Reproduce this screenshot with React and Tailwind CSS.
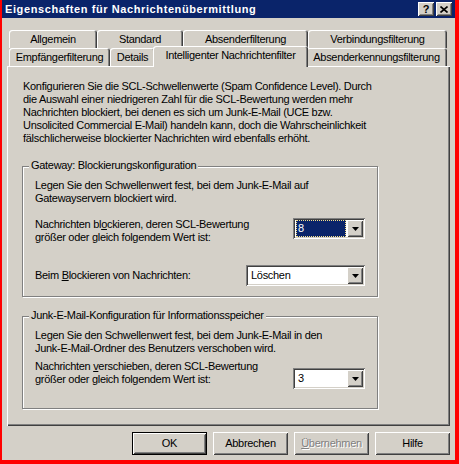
const RAISED =
  "shadow-[inset_1px_1px_0_#ffffff,inset_-1px_-1px_0_#404040,inset_2px_2px_0_#d4d0c8,inset_-2px_-2px_0_#808080]";
const SUNKEN =
  "shadow-[inset_1px_1px_0_#808080,inset_-1px_-1px_0_#ffffff,inset_2px_2px_0_#404040,inset_-2px_-2px_0_#d4d0c8]";
const TAB =
  "shadow-[inset_1px_1px_0_#ffffff,inset_-1px_0_0_#404040,inset_-2px_0_0_#808080] rounded-t-[3px] bg-[#d4d0c8]";

const ROW1 = [
  { label: "Allgemein", w: "w-[88px]" },
  { label: "Standard", w: "w-[86px]" },
  { label: "Absenderfilterung", w: "w-[125px]" },
  { label: "Verbindungsfilterung", w: "w-[139px]" },
];

function Arrow() {
  return (
    <svg width="7" height="4" viewBox="0 0 7 4">
      <path d="M0 0h7L3.5 4z" fill="#000" />
    </svg>
  );
}

function Combo({ value, focused, w }) {
  return (
    <div className={`${w} h-[21px] p-[2px] bg-white flex ${SUNKEN}`}>
      <div className="flex-1 flex items-center pl-[1px] pr-[1px]">
        {focused ? (
          <div className="w-full h-full bg-[#0a246a] text-white border border-dotted border-[#f5e08a] flex items-center pl-[1px] leading-none">
            {value}
          </div>
        ) : (
          <span className="pl-[2px] leading-none">{value}</span>
        )}
      </div>
      <div className={`w-[16px] h-full bg-[#d4d0c8] flex items-center justify-center ${RAISED}`}>
        <Arrow />
      </div>
    </div>
  );
}

function Button({ children, def, disabled }) {
  return (
    <div
      className={`w-[75px] h-[23px] flex items-center justify-center ${
        def ? "border border-black" : ""
      }`}
    >
      <div className={`w-full h-full flex items-center justify-center ${RAISED}`}>
        <span
          className={
            disabled ? "text-[#808080] [text-shadow:1px_1px_0_#ffffff]" : "text-black"
          }
        >
          {children}
        </span>
      </div>
    </div>
  );
}

function GroupBox({ title, h, children }) {
  return (
    <div
      className={`relative w-[356px] ${h} border border-[#808080] shadow-[inset_1px_1px_0_#ffffff,1px_1px_0_#ffffff]`}
    >
      <span className="absolute -top-[8px] left-[6px] px-[2px] bg-[#d4d0c8] leading-[13px] whitespace-nowrap">
        {title}
      </span>
      {children}
    </div>
  );
}

export default function App() {
  return (
    <div className="w-[459px] h-[464px] border-l-2 border-r-4 border-b-4 border-[#ff0000] bg-[#d4d0c8] flex flex-col font-['Liberation_Sans',Arial,sans-serif] text-[11px] leading-[13px] tracking-[-0.3px] text-black">
      {/* Title bar */}
      <div className="h-[18px] bg-[#0a246a] flex items-center justify-between pl-[3px] pr-[3px]">
        <span className="text-white font-bold text-[11px] whitespace-nowrap tracking-[0.6px]">
          Eigenschaften für Nachrichtenübermittlung
        </span>
        <div className="flex items-center gap-[2px]">
          <div className={`w-[16px] h-[14px] bg-[#d4d0c8] flex items-center justify-center ${RAISED}`}>
            <span className="font-bold text-[11px] leading-none">?</span>
          </div>
          <div className={`w-[16px] h-[14px] bg-[#d4d0c8] flex items-center justify-center ${RAISED}`}>
            <svg width="8" height="7" viewBox="0 0 8 7">
              <path d="M0.5 0.5L7.5 6.5M7.5 0.5L0.5 6.5" stroke="#000" strokeWidth="1.6" />
            </svg>
          </div>
        </div>
      </div>

      <div className="flex-1 flex flex-col px-[5px]">
        {/* Tabs */}
        <div className="mt-[12px] ml-[2px] flex">
          {ROW1.map((t) => (
            <div key={t.label} className={`${t.w} h-[18px] flex items-center justify-center pt-[1px] ${TAB}`}>
              {t.label}
            </div>
          ))}
        </div>
        <div className="ml-[2px] flex h-[18px] items-start">
          <div className={`w-[101px] h-[18px] flex items-center justify-center pt-[1px] ${TAB}`}>
            Empfängerfilterung
          </div>
          <div className={`w-[45px] h-[18px] flex items-center justify-center pt-[1px] ${TAB}`}>
            Details
          </div>
          <div className={`relative z-10 w-[155px] h-[21px] -mt-[2px] -mx-[2px] flex justify-center pt-[3px] ${TAB}`}>
            Intelligenter Nachrichtenfilter
          </div>
          <div className={`w-[141px] h-[18px] flex items-center justify-center pt-[1px] ${TAB}`}>
            Absenderkennungsfilterung
          </div>
        </div>

        {/* Panel */}
        <div className="h-[360px] w-[443px] shadow-[inset_1px_1px_0_#ffffff,inset_-1px_-1px_0_#404040,inset_-2px_-2px_0_#808080] flex flex-col">
          <p className="pt-[14px] pl-[16px] whitespace-nowrap">
            Konfigurieren Sie die SCL-Schwellenwerte (Spam Confidence Level). Durch
            <br />
            die Auswahl einer niedrigeren Zahl für die SCL-Bewertung werden mehr
            <br />
            Nachrichten blockiert, bei denen es sich um Junk-E-Mail (UCE bzw.
            <br />
            Unsolicited Commercial E-Mail) handeln kann, doch die Wahrscheinlichkeit
            <br />
            fälschlicherweise blockierter Nachrichten wird ebenfalls erhöht.
          </p>

          <div className="ml-[15px] mt-[21px]">
            <GroupBox title="Gateway: Blockierungskonfiguration" h="h-[131px]">
              <div className="pt-[12px] pl-[12px] pr-[12px] flex flex-col">
                <p className="whitespace-nowrap">
                  Legen Sie den Schwellenwert fest, bei dem Junk-E-Mail auf
                  <br />
                  Gatewayservern blockiert wird.
                </p>
                <div className="mt-[13px] flex justify-between items-start">
                  <p className="whitespace-nowrap">
                    Nachrichten bl<u>o</u>ckieren, deren SCL-Bewertung
                    <br />
                    größer oder gleich folgendem Wert ist:
                  </p>
                  <Combo value="8" focused w="w-[72px]" />
                </div>
                <div className="mt-[21px] flex justify-between items-center">
                  <p className="whitespace-nowrap">
                    Beim <u>B</u>lockieren von Nachrichten:
                  </p>
                  <Combo value="Löschen" w="w-[119px]" />
                </div>
              </div>
            </GroupBox>
          </div>

          <div className="ml-[15px] mt-[19px]">
            <GroupBox title="Junk-E-Mail-Konfiguration für Informationsspeicher" h="h-[93px]">
              <div className="pt-[12px] pl-[12px] pr-[12px] flex flex-col">
                <p className="whitespace-nowrap">
                  Legen Sie den Schwellenwert fest, bei dem Junk-E-Mail in den
                  <br />
                  Junk-E-Mail-Ordner des Benutzers verschoben wird.
                </p>
                <div className="mt-[5px] flex justify-between items-start">
                  <p className="whitespace-nowrap">
                    Nachrichten <u>v</u>erschieben, deren SCL-Bewertung
                    <br />
                    größer oder gleich folgendem Wert ist:
                  </p>
                  <Combo value="3" w="w-[72px] mt-[8px]" />
                </div>
              </div>
            </GroupBox>
          </div>
        </div>

        {/* Buttons */}
        <div className="mt-[6px] flex justify-end gap-[6px]">
          <Button def>OK</Button>
          <Button>Abbrechen</Button>
          <Button disabled>
            <u>Ü</u>bernehmen
          </Button>
          <Button>Hilfe</Button>
        </div>
      </div>
    </div>
  );
}
